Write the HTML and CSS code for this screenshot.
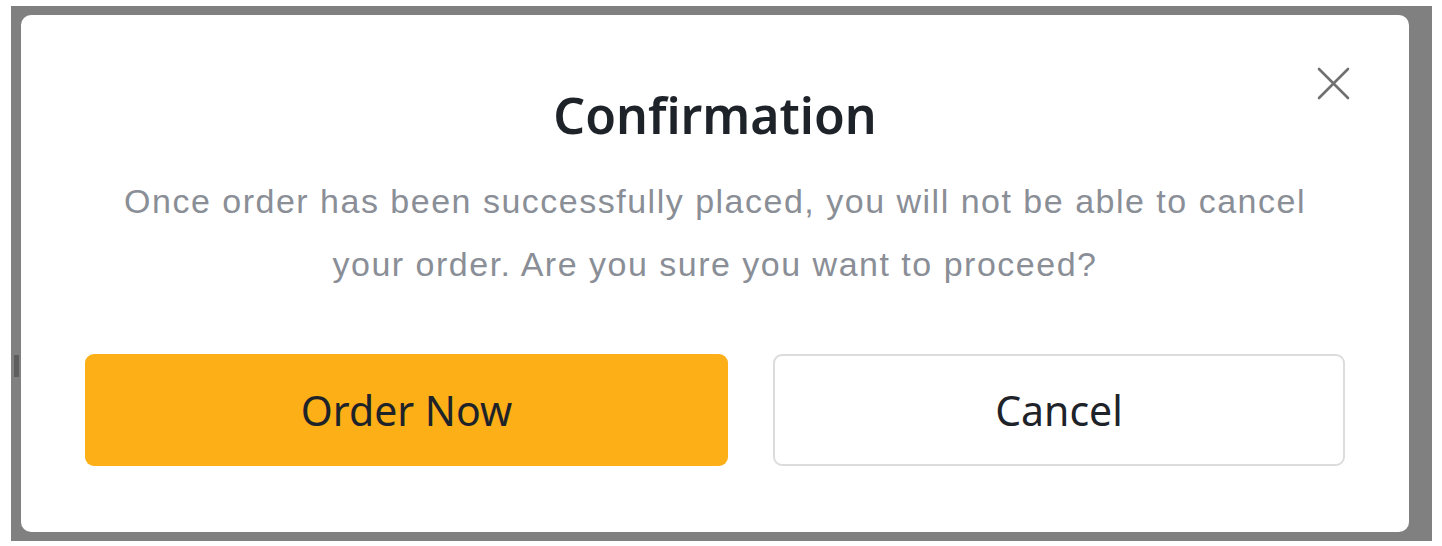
FILE: index.html
```html
<!DOCTYPE html>
<html lang="en">
<head>
<meta charset="utf-8">
<title>Confirmation</title>
<link rel="stylesheet" href="styles.css">
</head>
<body>
<div class="overlay">
  <span class="edge-mark"></span>
  <div class="modal">
    <button class="close" aria-label="Close">
      <svg width="33" height="33" viewBox="0 0 33 33"><path d="M2 2 L31 31 M31 2 L2 31" stroke="#707070" stroke-width="2.6" fill="none" stroke-linecap="round"/></svg>
    </button>
    <h1 class="title">Confirmation</h1>
    <p class="message">Once order has been successfully placed, you will not be able to cancel<br>your order. Are you sure you want to proceed?</p>
    <div class="actions">
      <button class="btn btn-primary">Order Now</button>
      <button class="btn btn-secondary">Cancel</button>
    </div>
  </div>
</div>
</body>
</html>
```

FILE: styles.css
```css
html, body {
  margin: 0;
  padding: 0;
  background: #ffffff;
}
body {
  padding: 6px 10px 5px 11px;
  font-family: "Liberation Sans", Arial, sans-serif;
}
.overlay {
  position: relative;
  width: 1421px;
  height: 535px;
  box-sizing: border-box;
  background: #808080;
  padding: 9px 23px 9px 10px;
}
.edge-mark {
  position: absolute;
  left: 3px;
  top: 349px;
  width: 5px;
  height: 22px;
  background: #5e5e5e;
}
.modal {
  position: relative;
  height: 517px;
  box-sizing: border-box;
  background: #ffffff;
  border-radius: 10px;
  padding: 70px 64px 0 64px;
  display: flex;
  flex-direction: column;
  align-items: stretch;
}
.close {
  position: absolute;
  right: 59px;
  top: 52px;
  width: 33px;
  height: 33px;
  padding: 0;
  border: 0;
  background: transparent;
}
.close svg { display: block; }
.title {
  margin: 0;
  text-align: center;
  font-family: "Noto Sans", "Liberation Sans", sans-serif;
  font-weight: 600;
  font-size: 50px;
  line-height: 60px;
  color: #1e2329;
}
.message {
  margin: 25px 0 0 0;
  text-align: center;
  font-size: 34px;
  letter-spacing: 1.5px;
  line-height: 63px;
  color: #8a8e96;
}
.actions {
  margin-top: 58px;
  display: grid;
  grid-template-columns: 643fr 572fr;
  column-gap: 45px;
}
.btn {
  height: 112px;
  border-radius: 9px;
  font-family: "Noto Sans", "Liberation Sans", sans-serif;
  font-size: 41px;
  color: #1e2329;
  cursor: pointer;
}
.btn-primary {
  background: #fcaf17;
  border: 0;
}
.btn-secondary {
  background: #ffffff;
  border: 2px solid #dcdcdc;
}
```
